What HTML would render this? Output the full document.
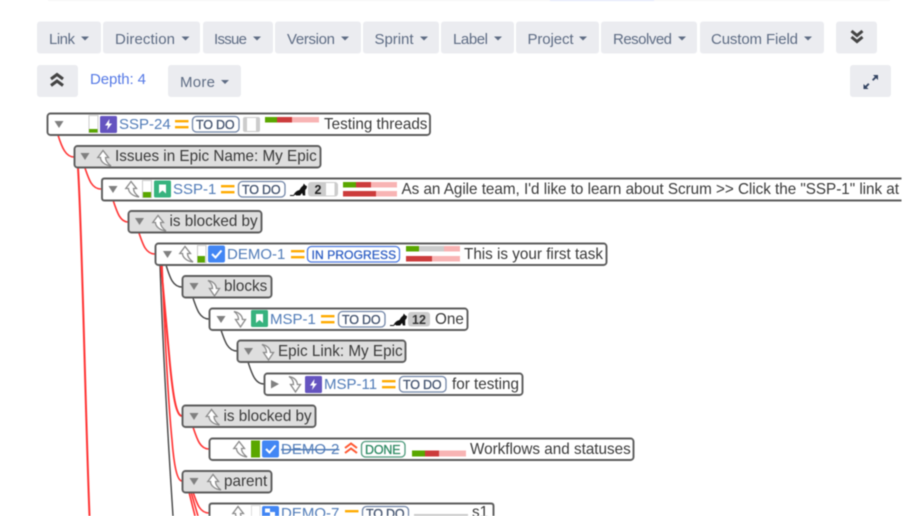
<!DOCTYPE html>
<html><head><meta charset="utf-8"><style>
html,body{margin:0;padding:0;background:#fff;width:907px;height:516px;overflow:hidden}
svg{display:block;filter:blur(.45px)}
text{font-family:"Liberation Sans",sans-serif;font-size:15.25px;fill:#3a3a3a}
.b{font-size:15px;fill:#5e6c84}
.k{fill:#517cb8;font-size:15px}
.s{font-size:12.5px;letter-spacing:.4px;stroke-width:.3px}
.n{fill:#fff;stroke:#5c5c5c;stroke-width:1.9}
.g{fill:#dedede;stroke:#5c5c5c;stroke-width:1.9}
.r{fill:none;stroke:#f33;stroke-width:1.6}
.l{fill:none;stroke:#444;stroke-width:1.4}
</style></head><body>
<svg width="907" height="516" viewBox="0 0 907 516" xmlns="http://www.w3.org/2000/svg">
<defs>
<path id="up" d="M6 .5 L.8 7.500 H3.500 C3.500 11 7 15 14 16 C10 13 8.500 10 8.500 7.500 H11.500 Z" fill="#fff" stroke="#8a8a8a" stroke-width="1.3"/>
<path id="dn" d="M1 .5 C6 1.500 9 4 9.500 8.500 H12.500 L7.500 16 L2.500 8.500 H5.500 C5.500 5 4 2.500 1 .5 Z" fill="#fff" stroke="#8a8a8a" stroke-width="1.3"/>
<path id="td" d="M0 0 H9 L4.500 7 Z" fill="#808080"/>
<g id="med"><rect width="13.500" height="2.400" fill="#ffab00"/><rect y="6" width="13.500" height="2.400" fill="#ffab00"/></g>
<g id="epic"><rect width="17" height="17" rx="1.500" fill="#6554c0"/><path d="M9.500 3 L5 9.500 H8 L7 14 L12 7.500 H9 Z" fill="#fff"/></g>
<g id="story"><rect width="17" height="17" rx="1.500" fill="#36b37e"/><path d="M5 4 H12 V13 L8.500 10 L5 13 Z" fill="#fff"/></g>
<g id="task"><rect width="17" height="17" rx="2" fill="#4286f4"/><path d="M4 8.500 L7.500 12 L13.500 5" fill="none" stroke="#fff" stroke-width="2"/></g>
<path id="cat" d="M0 12.500 H3.500 C5 9.500 7 8 9.500 7.500 C10.500 5.500 11.500 4 13 3.200 L13.800 1 L15.200 2.800 L17 3.800 L16.500 6 L15.200 7.500 V13 H13 L12 10.500 L10 13 H6 L5.500 12 L3.500 13.500 H0 Z" fill="#111"/>
</defs>

<rect x="48" y="0" width="842" height="1" fill="#f5f5f5"/>
<rect x="550" y="0" width="104" height="1" fill="#dfe4fb"/>

<!-- toolbar -->
<g fill="#ebecf0">
<rect x="37" y="21.500" width="64" height="32" rx="3"/>
<rect x="103" y="21.500" width="97" height="32" rx="3"/>
<rect x="203" y="21.500" width="70" height="32" rx="3"/>
<rect x="275" y="21.500" width="86" height="32" rx="3"/>
<rect x="363" y="21.500" width="76" height="32" rx="3"/>
<rect x="441" y="21.500" width="73" height="32" rx="3"/>
<rect x="516" y="21.500" width="83" height="32" rx="3"/>
<rect x="601" y="21.500" width="96" height="32" rx="3"/>
<rect x="700" y="21.500" width="124" height="32" rx="3"/>
<rect x="836" y="21.500" width="41" height="32" rx="3"/>
<rect x="37" y="65" width="41" height="32" rx="3"/>
<rect x="168" y="65" width="73" height="32" rx="3"/>
<rect x="850" y="65" width="41" height="32" rx="3"/>
</g>
<text class="b" x="49" y="44" textLength="26">Link</text>
<text class="b" x="115" y="44" textLength="60">Direction</text>
<text class="b" x="214" y="44" textLength="33">Issue</text>
<text class="b" x="287" y="44" textLength="48">Version</text>
<text class="b" x="374.500" y="44" textLength="39">Sprint</text>
<text class="b" x="453" y="44" textLength="35">Label</text>
<text class="b" x="527.500" y="44" textLength="46">Project</text>
<text class="b" x="613" y="44" textLength="59">Resolved</text>
<text class="b" x="711" y="44" textLength="87">Custom Field</text>
<text class="b" x="180" y="87" textLength="35">More</text>
<text x="90" y="84" textLength="56" style="fill:#5579e6;font-size:15px">Depth: 4</text>
<g fill="#5e6c84">
<path d="M81 36.500h8l-4 4z"/><path d="M181.500 36.500h8l-4 4z"/><path d="M253 36.500h8l-4 4z"/>
<path d="M341 36.500h8l-4 4z"/><path d="M420 36.500h8l-4 4z"/><path d="M494 36.500h8l-4 4z"/>
<path d="M579 36.500h8l-4 4z"/><path d="M678 36.500h8l-4 4z"/><path d="M804 36.500h8l-4 4z"/>
<path d="M221 80h8l-4 4z"/>
</g>
<g fill="none" stroke="#444" stroke-width="3">
<path d="M851.500 31 L857 35.500 L862.500 31"/><path d="M851.500 37 L857 41.500 L862.500 37"/>
<path d="M51 79 L57 74.500 L63 79"/><path d="M51 85.500 L57 81 L63 85.500"/>
</g>
<g fill="#344563">
<path d="M878 75 h-5 l1.800 1.800 -2.800 2.800 1.300 1.300 2.800 -2.800 1.900 1.900 z"/>
<path d="M863.500 89 h5 l-1.800 -1.800 2.800 -2.800 -1.300 -1.300 -2.800 2.800 -1.900 -1.900 z"/>
</g>

<!-- connectors -->
<path class="r" d="M58 135 C62 148 66 157 74 157"/>
<path class="r" style="stroke-width:2" d="M78 168 C82 230 85 400 89.500 516"/>
<path class="r" d="M85 168 C89 180 92 189 101 189"/>
<path class="r" d="M113 200 C117 212 120 222 128 222"/>
<path class="r" d="M139 233 C143 245 146 254 155 254"/>
<path class="l" d="M160 265 C163 350 168 440 173 516"/>
<path class="r" style="stroke-width:2" d="M161 265 C165 310 168 340 170 365 C173 395 176 416 182 416"/>
<path class="r" d="M162 265 C165 340 168 400 172 440 C174 465 177 481 182 481"/>
<path class="l" d="M166 265 C170 278 173 287 182 287"/>
<path class="l" d="M193 298 C197 310 200 319 209 319"/>
<path class="l" d="M221 330 C225 342 228 351 237 351"/>
<path class="l" d="M248 362 C252 374 255 384 264 384"/>
<path class="r" d="M193 427 C197 439 200 449 209 449"/>
<path class="r" d="M193 492 C197 504 200 513 209 513"/>
<path class="r" d="M189 492 L195 516"/><path class="r" d="M191 492 L198 516"/>

<!-- row 1 -->
<rect class="n" x="47.500" y="113.500" width="382.500" height="21.500" rx="3"/>
<use href="#td" x="54.500" y="121"/>
<rect x="89" y="115.500" width="9" height="17" fill="#fff" stroke="#ccc"/><rect x="89" y="129" width="8.500" height="3.500" fill="#5aa700"/>
<use href="#epic" x="100" y="116"/>
<text class="k" x="119" y="129">SSP-24</text>
<use href="#med" x="175" y="120"/>
<rect x="192.500" y="116.500" width="46.500" height="15.500" rx="4" fill="#fff" stroke="#7286a8" stroke-width="1.3"/>
<text class="s" x="196" y="129" textLength="39" style="fill:#42526e;stroke:#42526e">TO DO</text>
<rect x="243" y="117" width="17" height="15" rx="2" fill="#ccc"/><rect x="247" y="118" width="9" height="13" fill="#fff"/>
<rect x="265" y="117" width="12" height="5.500" fill="#5aa700"/><rect x="277" y="117" width="15" height="5.500" fill="#cc3c3c"/><rect x="292" y="117" width="27" height="5.500" fill="#f8b4b4"/>
<text x="324" y="129">Testing threads</text>

<!-- row 2 -->
<rect class="g" x="74.500" y="146" width="246" height="21.500" rx="3"/>
<use href="#td" x="80.500" y="153"/>
<use href="#up" x="97" y="150"/>
<text x="115" y="161">Issues in Epic Name: My Epic</text>

<!-- row 3 -->
<path d="M901.500 178.500 H104.500 Q102 178.500 102 181 V198 Q102 200.500 104.500 200.500 H901.500" fill="#fff" stroke="#5c5c5c" stroke-width="1.9"/>
<use href="#td" x="108.500" y="186"/>
<use href="#up" x="125" y="181"/>
<rect x="142.500" y="180.500" width="9" height="17" fill="#fff" stroke="#ccc"/><rect x="143" y="192" width="8" height="5.500" fill="#5aa700"/>
<use href="#story" x="154" y="180.500"/>
<text class="k" x="173" y="194">SSP-1</text>
<use href="#med" x="221" y="185"/>
<rect x="238.500" y="181.500" width="46.500" height="15.500" rx="4" fill="#fff" stroke="#7286a8" stroke-width="1.3"/>
<text class="s" x="242" y="194" textLength="39" style="fill:#42526e;stroke:#42526e">TO DO</text>
<use href="#cat" x="290" y="182.500"/>
<rect x="308" y="182" width="30" height="14.500" rx="3" fill="#ccc"/><rect x="326" y="183" width="8.500" height="12.500" fill="#fff"/>
<text x="314.500" y="194" style="font-size:12.500px;font-weight:bold;fill:#222">2</text>
<rect x="343" y="182" width="13" height="5.500" fill="#5aa700"/><rect x="356" y="182" width="15" height="5.500" fill="#cc3c3c"/><rect x="371" y="182" width="26" height="5.500" fill="#f8b4b4"/>
<rect x="343" y="191" width="33" height="5.500" fill="#cc3c3c"/><rect x="376" y="191" width="21" height="5.500" fill="#f8b4b4"/>
<text x="401.500" y="194" textLength="497.500">As an Agile team, I'd like to learn about Scrum &gt;&gt; Click the "SSP-1" link at</text>

<!-- row 4 -->
<rect class="g" x="128.500" y="211" width="133" height="21.500" rx="3"/>
<use href="#td" x="135" y="218"/>
<use href="#up" x="152" y="215"/>
<text x="169.500" y="226">is blocked by</text>

<!-- row 5 -->
<rect class="n" x="155.500" y="243.500" width="451" height="21.500" rx="3"/>
<use href="#td" x="163" y="251"/>
<use href="#up" x="179" y="246"/>
<rect x="197.500" y="245.500" width="8.500" height="17" fill="#fff" stroke="#ccc"/><rect x="197.500" y="256" width="7.500" height="6.500" fill="#5aa700"/>
<use href="#task" x="208" y="245.500"/>
<text class="k" x="227" y="259">DEMO-1</text>
<use href="#med" x="291" y="250"/>
<rect x="307.500" y="246.500" width="92" height="15.500" rx="4" fill="#fff" stroke="#4c7ae0" stroke-width="1.300"/>
<text class="s" x="311.500" y="259" textLength="85" style="fill:#2f5fc4;stroke:#2f5fc4;font-size:12px">IN PROGRESS</text>
<rect x="406" y="246" width="13" height="5.500" fill="#5aa700"/><rect x="419" y="246" width="25" height="5.500" fill="#ccc"/><rect x="444" y="246" width="16" height="5.500" fill="#f8b4b4"/>
<rect x="406" y="256" width="26" height="5.500" fill="#cc3c3c"/><rect x="432" y="256" width="28" height="5.500" fill="#f8b4b4"/>
<text x="464" y="259">This is your first task</text>

<!-- row 6 -->
<rect class="g" x="182.500" y="276" width="89" height="21.500" rx="3"/>
<use href="#td" x="189.500" y="283"/>
<use href="#dn" x="207" y="280"/>
<text x="224" y="291">blocks</text>

<!-- row 7 -->
<rect class="n" x="209.500" y="308.500" width="258" height="21.500" rx="3"/>
<use href="#td" x="216.500" y="316"/>
<use href="#dn" x="233" y="311"/>
<use href="#story" x="251" y="310"/>
<text class="k" x="270" y="324">MSP-1</text>
<use href="#med" x="321" y="315"/>
<rect x="338.500" y="311.500" width="46.500" height="15.500" rx="4" fill="#fff" stroke="#7286a8" stroke-width="1.300"/>
<text class="s" x="342" y="324" textLength="39" style="fill:#42526e;stroke:#42526e">TO DO</text>
<use href="#cat" x="390" y="312.500"/>
<rect x="408" y="312" width="22" height="14.500" rx="3" fill="#ccc"/>
<text x="412" y="324" style="font-size:12.500px;font-weight:bold;fill:#333">12</text>
<text x="435" y="324">One</text>

<!-- row 8 -->
<rect class="g" x="237.500" y="340.500" width="168" height="21.500" rx="3"/>
<use href="#td" x="244" y="348"/>
<use href="#dn" x="261" y="344"/>
<text x="278" y="356">Epic Link: My Epic</text>

<!-- row 9 -->
<rect class="n" x="264.500" y="373.500" width="258" height="21.500" rx="3"/>
<path d="M271 380 L279 384 L271 388.500 Z" fill="#808080"/>
<use href="#dn" x="288" y="376"/>
<use href="#epic" x="305" y="376"/>
<text class="k" x="324" y="389">MSP-11</text>
<use href="#med" x="382" y="380"/>
<rect x="399.500" y="376.500" width="46.500" height="15.500" rx="4" fill="#fff" stroke="#7286a8" stroke-width="1.300"/>
<text class="s" x="403" y="389" textLength="39" style="fill:#42526e;stroke:#42526e">TO DO</text>
<text x="452" y="389">for testing</text>

<!-- row 10 -->
<rect class="g" x="182.500" y="405.500" width="133" height="21.500" rx="3"/>
<use href="#td" x="189.500" y="413"/>
<use href="#up" x="205.500" y="409"/>
<text x="223.500" y="421">is blocked by</text>

<!-- row 11 -->
<rect class="n" x="209.500" y="438.500" width="424" height="21.500" rx="3"/>
<use href="#up" x="233" y="441"/>
<rect x="251" y="440.500" width="9" height="17" fill="#5aa700"/>
<use href="#task" x="262" y="440.500"/>
<text class="k" x="281" y="454" style="text-decoration:line-through">DEMO-2</text>
<path d="M345 448 L351 443.500 L357 448 M345 453 L351 448.500 L357 453" fill="none" stroke="#ff5630" stroke-width="2"/>
<rect x="361.500" y="441.500" width="43.500" height="15.500" rx="4" fill="#fff" stroke="#4e9a7c" stroke-width="1.300"/>
<text class="s" x="365" y="454" textLength="36" style="fill:#2d8a63;stroke:#2d8a63">DONE</text>
<rect x="412" y="450.500" width="13" height="6" fill="#5aa700"/><rect x="425" y="450.500" width="14" height="6" fill="#cc3c3c"/><rect x="439" y="450.500" width="27" height="6" fill="#f8b4b4"/>
<text x="470" y="454">Workflows and statuses</text>

<!-- row 12 -->
<rect class="g" x="182.500" y="471" width="89" height="21.500" rx="3"/>
<use href="#td" x="189.500" y="478"/>
<use href="#up" x="207" y="474"/>
<text x="224" y="486">parent</text>

<!-- row 13 -->
<path d="M209.500 530 V506 Q209.500 503.500 212 503.500 H491 Q493.500 503.500 493.500 506 V530" fill="#fff" stroke="#5c5c5c" stroke-width="1.900"/>
<use href="#up" x="232" y="506"/>
<rect x="251.500" y="505.500" width="8.500" height="17" fill="#fff" stroke="#ddd"/>
<rect x="262" y="506" width="17" height="17" rx="2" fill="#4286f4"/><rect x="265" y="508.500" width="5" height="4" fill="#fff"/><rect x="270" y="512" width="5" height="4" fill="#fff"/>
<text class="k" x="281" y="518">DEMO-7</text>
<rect x="345" y="510" width="13.500" height="2.400" fill="#ffab00"/>
<rect x="362.500" y="506.500" width="46" height="15.500" rx="4" fill="#fff" stroke="#7286a8" stroke-width="1.300"/>
<text class="s" x="366" y="518" textLength="39" style="fill:#42526e;stroke:#42526e">TO DO</text>
<rect x="414" y="514" width="54" height="4" fill="#ccc"/>
<text x="472" y="517">s1</text>
</svg>
</body></html>
